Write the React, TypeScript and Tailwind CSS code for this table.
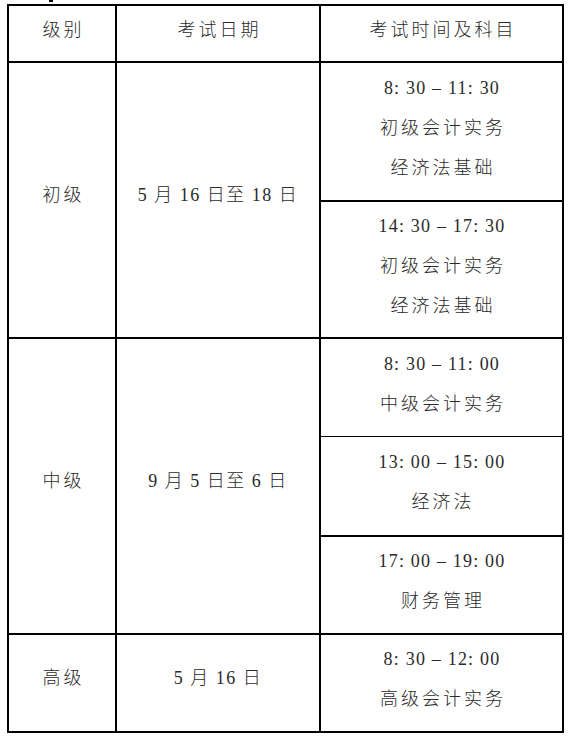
const font = { fontFamily: '"Liberation Serif", "Noto Sans CJK SC", serif' };

function Lines({ lines }: { lines: string[] }) {
  return (
    <div className="flex flex-col items-center">
      {lines.map((l, i) => (
        <div
          key={l}
          className={`leading-[40px] whitespace-pre ${i === 0 ? "tracking-[1.2px] pl-[1px]" : "tracking-[3px] pl-[3px]"}`}
        >
          {l}
        </div>
      ))}
    </div>
  );
}

type Sub = { h: string; lines: string[]; border: string };

function Group({
  level,
  date,
  subs,
  height,
}: {
  level: string;
  date: string;
  subs: Sub[];
  height: string;
}) {
  return (
    <div className={`flex border-t-2 border-black ${height}`}>
      <div className="w-[106px] flex items-center justify-center pb-[10px] tracking-[3px] pl-[3px]">
        {level}
      </div>
      <div className="w-[204px] border-l-2 border-black flex items-center justify-center pb-[10px] whitespace-pre tracking-[1.5px]">
        {date}
      </div>
      <div className="flex-1 border-l-2 border-black flex flex-col">
        {subs.map((s, i) => (
          <div
            key={i}
            className={`${s.h} flex items-center justify-center pb-[8px] ${i > 0 ? s.border : ""}`}
          >
            <Lines lines={s.lines} />
          </div>
        ))}
      </div>
    </div>
  );
}

export default function App() {
  return (
    <div className="w-[569px] h-[736px] bg-white relative text-[18px] font-light text-[#2a2a2a]" style={font}>
      <div className="absolute left-[49px] top-0 w-[4px] h-[2px] bg-black" />
      <div className="pt-[4px] pl-[7px]">
        <div className="w-[557px] border-2 border-black">
          <div className="flex h-[55px]">
            <div className="w-[106px] flex items-center justify-center pb-[6px] tracking-[3px] pl-[3px]">
              级别
            </div>
            <div className="w-[204px] border-l-2 border-black flex items-center justify-center pb-[6px] tracking-[3px] pl-[3px]">
              考试日期
            </div>
            <div className="flex-1 border-l-2 border-black flex items-center justify-center pb-[6px] tracking-[3px] pl-[3px]">
              考试时间及科目
            </div>
          </div>
          <Group
            level="初级"
            date="5 月 16 日至 18 日"
            height="h-[276px]"
            subs={[
              { h: "h-[138px]", lines: ["8: 30 – 11: 30", "初级会计实务", "经济法基础"], border: "" },
              {
                h: "h-[138px]",
                lines: ["14: 30 – 17: 30", "初级会计实务", "经济法基础"],
                border: "border-t-2 border-black",
              },
            ]}
          />
          <Group
            level="中级"
            date="9 月 5 日至 6 日"
            height="h-[296px]"
            subs={[
              { h: "h-[98px]", lines: ["8: 30 – 11: 00", "中级会计实务"], border: "" },
              {
                h: "h-[99px]",
                lines: ["13: 00 – 15: 00", "经济法"],
                border: "border-t border-black",
              },
              {
                h: "h-[99px]",
                lines: ["17: 00 – 19: 00", "财务管理"],
                border: "border-t-2 border-black",
              },
            ]}
          />
          <Group
            level="高级"
            date="5 月 16 日"
            height="h-[98px]"
            subs={[{ h: "h-[96px]", lines: ["8: 30 – 12: 00", "高级会计实务"], border: "" }]}
          />
        </div>
      </div>
    </div>
  );
}
